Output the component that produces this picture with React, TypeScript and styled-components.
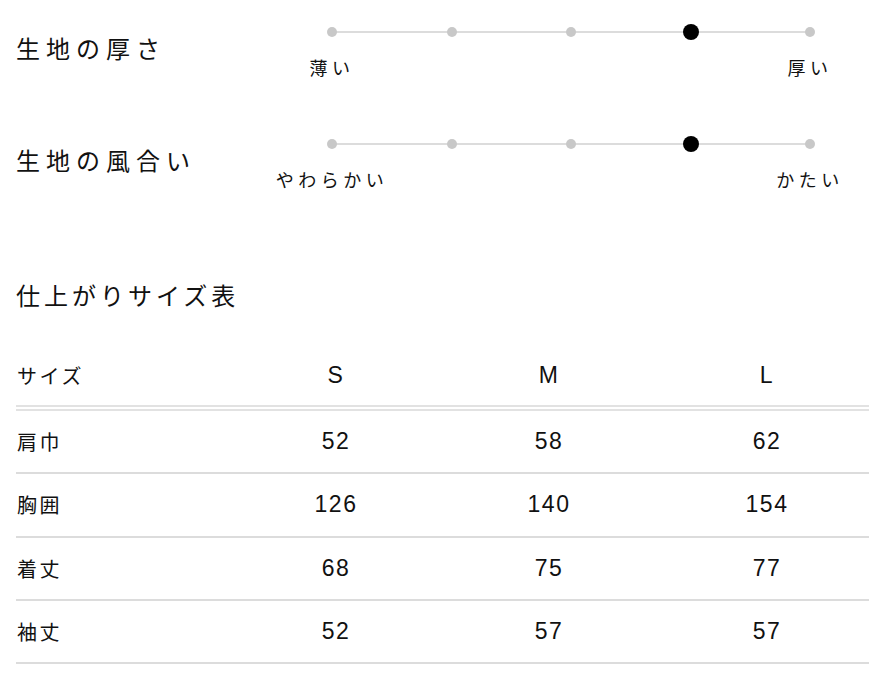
import React from 'react';
import styled, { createGlobalStyle } from 'styled-components';

const GlobalStyle = createGlobalStyle`
  html, body {
    margin: 0;
    padding: 0;
    background: #fff;
  }
  body {
    font-family: 'Liberation Sans', 'Noto Sans CJK JP', sans-serif;
    color: #111;
  }
`;

interface ScaleItem {
  title: string;
  left: string;
  right: string;
  value: number;
}

const scales: ScaleItem[] = [
  { title: '生地の厚さ', left: '薄い', right: '厚い', value: 3 },
  { title: '生地の風合い', left: 'やわらかい', right: 'かたい', value: 3 },
];

const sizes = ['S', 'M', 'L'];

const rows: { label: string; values: number[] }[] = [
  { label: '肩巾', values: [52, 58, 62] },
  { label: '胸囲', values: [126, 140, 154] },
  { label: '着丈', values: [68, 75, 77] },
  { label: '袖丈', values: [52, 57, 57] },
];

const Page = styled.div`
  padding: 24px 13px 0 16px;
`;

const ScaleList = styled.div`
  display: flex;
  flex-direction: column;
  gap: 55px;
`;

const ScaleRow = styled.div`
  display: flex;
  align-items: flex-start;
`;

const ScaleTitle = styled.h3`
  flex: 0 0 308px;
  margin: 0;
  padding-top: 11px;
  font-size: 24px;
  line-height: 30px;
  font-weight: 400;
  letter-spacing: 6px;
  color: #111;
`;

const ScaleBody = styled.div`
  width: 494px;
`;

const DotTrack = styled.div`
  display: flex;
  justify-content: space-between;
  height: 16px;
  background: linear-gradient(#dcdcdc, #dcdcdc) center / calc(100% - 16px) 2px no-repeat;
`;

const DotCell = styled.div`
  width: 16px;
  height: 16px;
  display: flex;
  align-items: center;
  justify-content: center;
`;

const Dot = styled.span<{ $active: boolean }>`
  display: block;
  width: ${(p) => (p.$active ? '16px' : '10px')};
  height: ${(p) => (p.$active ? '16px' : '10px')};
  border-radius: 50%;
  background: ${(p) => (p.$active ? '#000' : '#c8c8c8')};
`;

const LabelRow = styled.div`
  display: flex;
  justify-content: space-between;
  margin: 17px -52px 0;
`;

const EndLabel = styled.span`
  width: 120px;
  text-align: center;
  font-size: 18px;
  line-height: 24px;
  letter-spacing: 4.5px;
  color: #111;
`;

const SectionTitle = styled.h2`
  margin: 89px 0 33px;
  font-size: 24px;
  line-height: 30px;
  font-weight: 400;
  letter-spacing: 4px;
  color: #111;
`;

const Table = styled.div`
  display: flex;
  flex-direction: column;
`;

const Row = styled.div<{ $head?: boolean }>`
  display: grid;
  grid-template-columns: 223px 194px 232px 1fr;
  align-items: center;
  height: ${(p) => (p.$head ? '60px' : '61.3px')};
  border-bottom: ${(p) => (p.$head ? '6px double #e2e2e2' : '2px solid #dcdcdc')};
`;

const LabelCell = styled.div`
  padding-left: 1px;
  font-size: 20px;
  letter-spacing: 2.5px;
  color: #111;
`;

const ValueCell = styled.div`
  text-align: center;
  font-size: 23px;
  letter-spacing: 1.5px;
  color: #111;
`;

const App: React.FC = () => {
  return (
    <Page>
      <GlobalStyle />
      <ScaleList>
        {scales.map((s) => (
          <ScaleRow key={s.title}>
            <ScaleTitle>{s.title}</ScaleTitle>
            <ScaleBody>
              <DotTrack>
                {[0, 1, 2, 3, 4].map((i) => (
                  <DotCell key={i}>
                    <Dot $active={i === s.value} />
                  </DotCell>
                ))}
              </DotTrack>
              <LabelRow>
                <EndLabel>{s.left}</EndLabel>
                <EndLabel>{s.right}</EndLabel>
              </LabelRow>
            </ScaleBody>
          </ScaleRow>
        ))}
      </ScaleList>

      <SectionTitle>仕上がりサイズ表</SectionTitle>

      <Table>
        <Row $head>
          <LabelCell>サイズ</LabelCell>
          {sizes.map((s) => (
            <ValueCell key={s}>{s}</ValueCell>
          ))}
        </Row>
        {rows.map((r) => (
          <Row key={r.label}>
            <LabelCell>{r.label}</LabelCell>
            {r.values.map((v, i) => (
              <ValueCell key={i}>{v}</ValueCell>
            ))}
          </Row>
        ))}
      </Table>
    </Page>
  );
};

export default App;
